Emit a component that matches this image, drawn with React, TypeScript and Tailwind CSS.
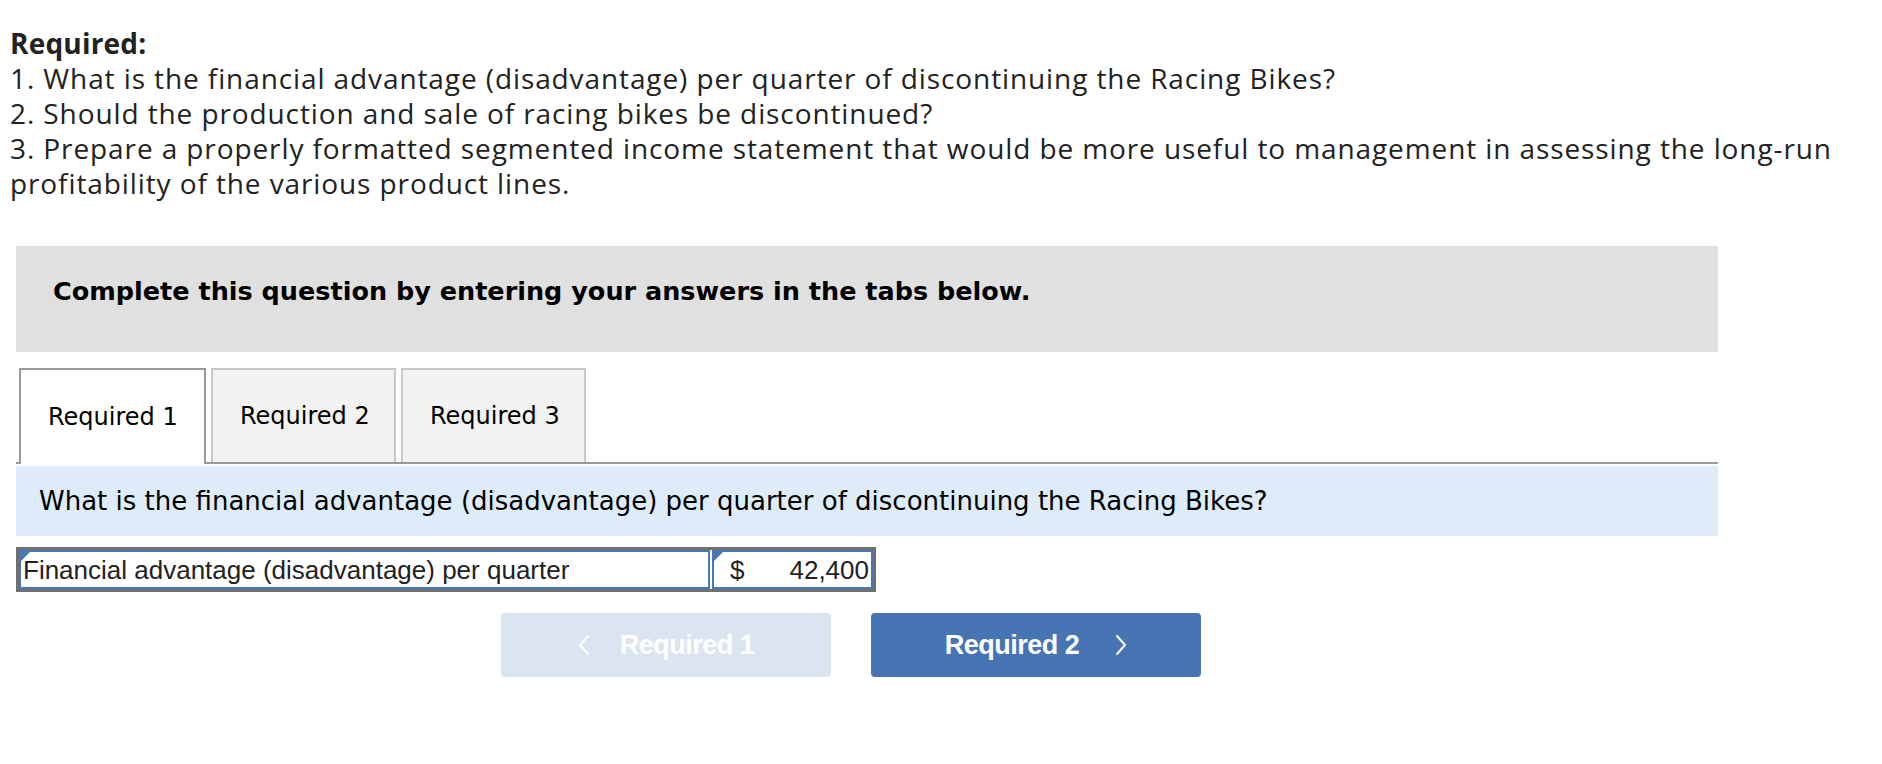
const QUESTIONS = [
  '1. What is the financial advantage (disadvantage) per quarter of discontinuing the Racing Bikes?',
  '2. Should the production and sale of racing bikes be discontinued?',
];

const TABS = ['Required 1', 'Required 2', 'Required 3'];

function Corner() {
  return <span className="absolute left-0 top-0 w-0 h-0 border-t-[9px] border-r-[9px] border-t-[#4a77b5] border-r-transparent" />;
}

function Chevron({ dir }: { dir: 'left' | 'right' }) {
  return (
    <svg width="12" height="22" viewBox="0 0 12 22" fill="none" stroke="currentColor" strokeWidth="2" strokeLinecap="round" strokeLinejoin="round">
      {dir === 'left' ? <polyline points="10,2 2,11 10,20" /> : <polyline points="2,2 10,11 2,20" />}
    </svg>
  );
}

export default function App() {
  return (
    <div className="w-[1882px] h-[764px] bg-white text-[#222]">
      {/* Required */}
      <div className="pl-[10px] pt-[26px] text-[28px] leading-[35px] font-['Open_Sans',sans-serif] tracking-[0.9px]">
        <div className="font-bold tracking-[0.2px]">Required:</div>
        {QUESTIONS.map(q => (
          <div key={q} className="whitespace-nowrap">{q}</div>
        ))}
        <div className="whitespace-nowrap">
          3. Prepare a properly formatted segmented income statement that would be more useful to management in assessing the long-run
          <br />
          profitability of the various product lines.
        </div>
      </div>

      <div className="ml-[16px] w-[1702px] mt-[45px]">
        {/* Instructions */}
        <div className="h-[106px] bg-[#e0e0e0] pl-[37px] pt-[30px] font-['DejaVu_Sans',sans-serif] font-bold text-[25.5px] leading-[30px] text-black">
          Complete this question by entering your answers in the tabs below.
        </div>

        {/* Tabs */}
        <div className="mt-[16px] flex items-end gap-[5px] pl-[3px] border-b-2 border-[#999] h-[96px]">
          {TABS.map((t, i) => (
            <div
              key={t}
              className={
                i === 0
                  ? 'w-[187px] h-[96px] -mb-[2px] bg-white border-2 border-b-0 border-[#999] flex items-center pl-[27px] font-[\'DejaVu_Sans\',sans-serif] text-[24px] text-black'
                  : 'w-[185px] h-[94px] bg-[#f2f2f2] border-2 border-b-0 border-[#c8c8c8] flex items-center pl-[27px] font-[\'DejaVu_Sans\',sans-serif] text-[24px] text-black'
              }
            >
              {t}
            </div>
          ))}
        </div>

        {/* Question */}
        <div className="mt-[2px] h-[70px] bg-[#ddecf8] flex items-center pl-[23px] font-['DejaVu_Sans',sans-serif] text-[26px] text-black">
          What is the financial advantage (disadvantage) per quarter of discontinuing the Racing Bikes?
        </div>

        {/* Answer row */}
        <div className="mt-[11px] w-[860px] border-[3px] border-[#6f6f6f] flex gap-[2px] bg-white font-['Liberation_Sans',sans-serif] text-[26px] text-[#222]">
          <div className="relative w-[691px] h-[39px] border-2 border-[#4a77b5] flex items-center pl-[2px] leading-none">
            <Corner />
            Financial advantage (disadvantage) per quarter
          </div>
          <div className="relative flex-1 h-[39px] border-2 border-[#4a77b5] flex items-center justify-between pl-[16px] pr-[2px] leading-none">
            <Corner />
            <span>$</span>
            <span>42,400</span>
          </div>
        </div>

        {/* Nav buttons */}
        <div className="mt-[21px] ml-[485px] flex gap-[40px] font-['Liberation_Sans',sans-serif] font-bold text-[27px] tracking-[-0.5px] text-white">
          <button className="w-[330px] h-[64px] rounded-[4px] bg-[#dbe5f1] flex items-center justify-center gap-[30px]">
            <Chevron dir="left" />
            <span>Required 1</span>
          </button>
          <button className="w-[330px] h-[64px] rounded-[4px] bg-[#4775b3] flex items-center justify-center gap-[36px]">
            <span>Required 2</span>
            <Chevron dir="right" />
          </button>
        </div>
      </div>
    </div>
  );
}
